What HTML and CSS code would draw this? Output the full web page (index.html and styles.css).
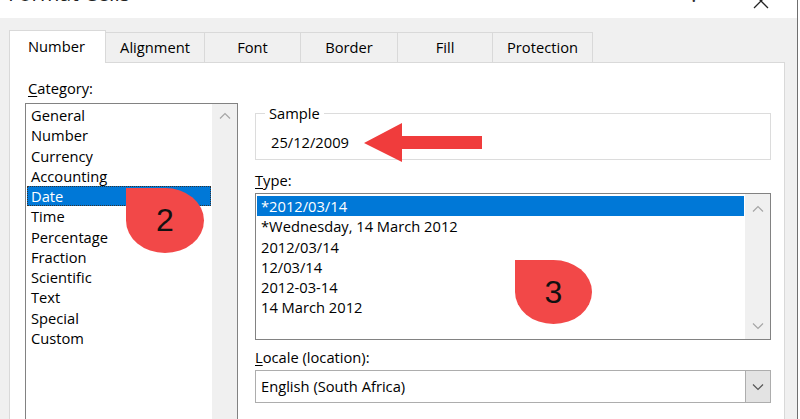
FILE: index.html
```html
<!DOCTYPE html>
<html>
<head>
<meta charset="utf-8">
<link rel="stylesheet" href="styles.css">
</head>
<body>
<div class="window">
  <div class="titlebar">
    <span class="title">Format Cells</span>
    <div class="controls">
      <span class="help">?</span>
      <svg class="close" width="16" height="18" viewBox="0 0 16 18"><path d="M1 -6 L15 8 M15 -6 L1 8" stroke="#222" stroke-width="1.3" fill="none"/></svg>
    </div>
  </div>
  <div class="tabs">
    <div class="tab active w97">Number</div>
    <div class="tab w99">Alignment</div>
    <div class="tab w96">Font</div>
    <div class="tab w97">Border</div>
    <div class="tab w95">Fill</div>
    <div class="tab w100">Protection</div>
  </div>
  <div class="panel">
    <div class="col-left">
      <div class="label cat-label"><u>C</u>ategory:</div>
      <div class="listbox cat-list">
        <ul class="items">
          <li>General</li>
          <li>Number</li>
          <li>Currency</li>
          <li>Accounting</li>
          <li class="sel dotted">Date</li>
          <li>Time</li>
          <li>Percentage</li>
          <li>Fraction</li>
          <li>Scientific</li>
          <li>Text</li>
          <li>Special</li>
          <li>Custom</li>
        </ul>
        <div class="scrollbar">
          <svg class="chev" width="12" height="8" viewBox="0 0 12 8"><path d="M1 6.5 L6 1.5 L11 6.5" stroke="#a6a6a6" stroke-width="1.2" fill="none"/></svg>
        </div>
      </div>
    </div>
    <div class="col-right">
      <fieldset class="sample">
        <legend>Sample</legend>
        <div class="sample-val">25/12/2009</div>
      </fieldset>
      <div class="label type-label"><u>T</u>ype:</div>
      <div class="listbox type-list">
        <ul class="items">
          <li class="sel">*2012/03/14</li>
          <li>*Wednesday, 14 March 2012</li>
          <li>2012/03/14</li>
          <li>12/03/14</li>
          <li>2012-03-14</li>
          <li>14 March 2012</li>
        </ul>
        <div class="scrollbar split">
          <svg class="chev" width="12" height="8" viewBox="0 0 12 8"><path d="M1 6.5 L6 1.5 L11 6.5" stroke="#a6a6a6" stroke-width="1.2" fill="none"/></svg>
          <svg class="chev" width="12" height="8" viewBox="0 0 12 8"><path d="M1 1.5 L6 6.5 L11 1.5" stroke="#a6a6a6" stroke-width="1.2" fill="none"/></svg>
        </div>
      </div>
      <div class="label locale-label"><u>L</u>ocale (location):</div>
      <div class="combo">
        <span class="combo-text">English (South Africa)</span>
        <span class="combo-btn">
          <svg width="12" height="8" viewBox="0 0 12 8"><path d="M1 1.5 L6 6.5 L11 1.5" stroke="#555" stroke-width="1.2" fill="none"/></svg>
        </span>
      </div>
    </div>
  </div>

  <svg class="arrow" width="122" height="42" viewBox="0 0 122 42"><polygon points="0,21 38,1 38,14 118,14 118,27 38,27 38,40" fill="#f03c3c"/></svg>
  <div class="marker m2">2</div>
  <div class="marker m3">3</div>
</div>
</body>
</html>
```

FILE: styles.css
```css
* { box-sizing: border-box; }
html, body { margin: 0; padding: 0; background: #fff; }
body {
  font-family: "Open Sans", "Noto Sans", "DejaVu Sans", sans-serif;
  font-size: 14.7px;
  color: #000;
  width: 800px;
  height: 419px;
  overflow: hidden;
}
.window {
  position: relative;
  width: 798px;
  height: 419px;
  background: #f0f0f0;
  border-right: 1px solid #6f6f6f;
  overflow: hidden;
}
.titlebar {
  height: 18px;
  background: #fff;
  display: flex;
  justify-content: space-between;
  overflow: hidden;
}
.title {
  font-size: 21px;
  line-height: 28px;
  margin-top: -21px;
  margin-left: 8px;
  color: #222;
}
.controls {
  display: flex;
  align-items: flex-start;
}
.help {
  font-size: 20px;
  line-height: 20px;
  margin-top: -15px;
  margin-right: 54px;
  color: #333;
}
.close { margin-right: 28px; display: block; }

.tabs {
  display: flex;
  align-items: flex-end;
  height: 32px;
  margin-top: 12px;
  padding-left: 9px;
  position: relative;
  z-index: 2;
}
.tab {
  height: 30px;
  border: 1px solid #d9d9d9;
  border-left: none;
  border-bottom: none;
  display: flex;
  align-items: center;
  justify-content: center;
  padding-bottom: 1px;
  background: #f0f0f0;
}
.tab.active {
  height: 33px;
  margin-bottom: -1px;
  background: #fff;
  border-left: 1px solid #d9d9d9;
  justify-content: flex-start;
  padding-left: 18px;
  padding-bottom: 2px;
}
.w95 { width: 95px; }
.w96 { width: 96px; }
.w97 { width: 97px; }
.w99 { width: 99px; }
.w100 { width: 100px; }

.panel {
  margin-left: 9px;
  width: 776px;
  height: 400px;
  background: #fff;
  border: 1px solid #d9d9d9;
  display: flex;
  gap: 17px;
  padding-left: 15px;
  position: relative;
  z-index: 1;
}
.col-left { width: 213px; }
.col-right { width: 516px; }

.label { line-height: 20px; height: 20px; }
.label u { text-decoration-thickness: 1px; text-underline-offset: 2px; }
.cat-label { margin-top: 15px; margin-left: 3px; margin-bottom: 5px; }

.listbox {
  border: 1px solid #828282;
  display: flex;
  background: #fff;
}
.items {
  list-style: none;
  margin: 0;
  flex: 1;
}
.items li {
  line-height: 20.25px;
  height: 20.25px;
  padding-left: 4px;
  white-space: nowrap;
}
.items li.sel { background: #0078d7; color: #fff; }
.items li.dotted { outline: 1px dotted #333; outline-offset: -1px; }
.scrollbar {
  width: 25px;
  background: #f0f0f0;
  display: flex;
  flex-direction: column;
  align-items: center;
  padding-top: 8px;
}
.scrollbar.split { justify-content: space-between; padding: 11px 0 9px; }
.chev { display: block; }

.cat-list { height: 330px; }
.cat-list .items { padding: 1px 1px 0 1px; }

.sample {
  margin: 0;
  padding: 0 0 0 15px;
  border: 1px solid #dcdcdc;
  height: 57px;
  margin-top: 40px;
}
.sample legend {
  padding: 0 4px;
  margin-left: -6px;
  line-height: 20px;
}
.sample-val { line-height: 20px; margin-top: 9px; }

.type-label { margin-top: 10px; margin-bottom: 3px; }
.type-list { height: 147px; }
.type-list .items { padding: 2px 1px 0 1px; }

.locale-label { margin-top: 7px; margin-bottom: 3px; }
.combo {
  height: 33px;
  border: 1px solid #adadad;
  display: flex;
  align-items: stretch;
}
.combo-text { flex: 1; line-height: 31px; padding-left: 5px; }
.combo-btn {
  width: 25px;
  background: #e3e3e3;
  border-left: 1px solid #adadad;
  display: flex;
  align-items: center;
  justify-content: center;
}

.arrow { position: absolute; left: 364px; top: 122px; z-index: 5; }
.marker {
  position: absolute;
  z-index: 5;
  background: #f24848;
  border-radius: 0 50% 50% 50%;
  color: #111;
  font-family: "Liberation Sans", Arial, sans-serif;
  font-size: 32px;
  display: flex;
  align-items: center;
  justify-content: center;
}
.m2 { left: 126px; top: 188px; width: 78px; height: 65px; }
.m3 { left: 515px; top: 260px; width: 77px; height: 64px; }
```
